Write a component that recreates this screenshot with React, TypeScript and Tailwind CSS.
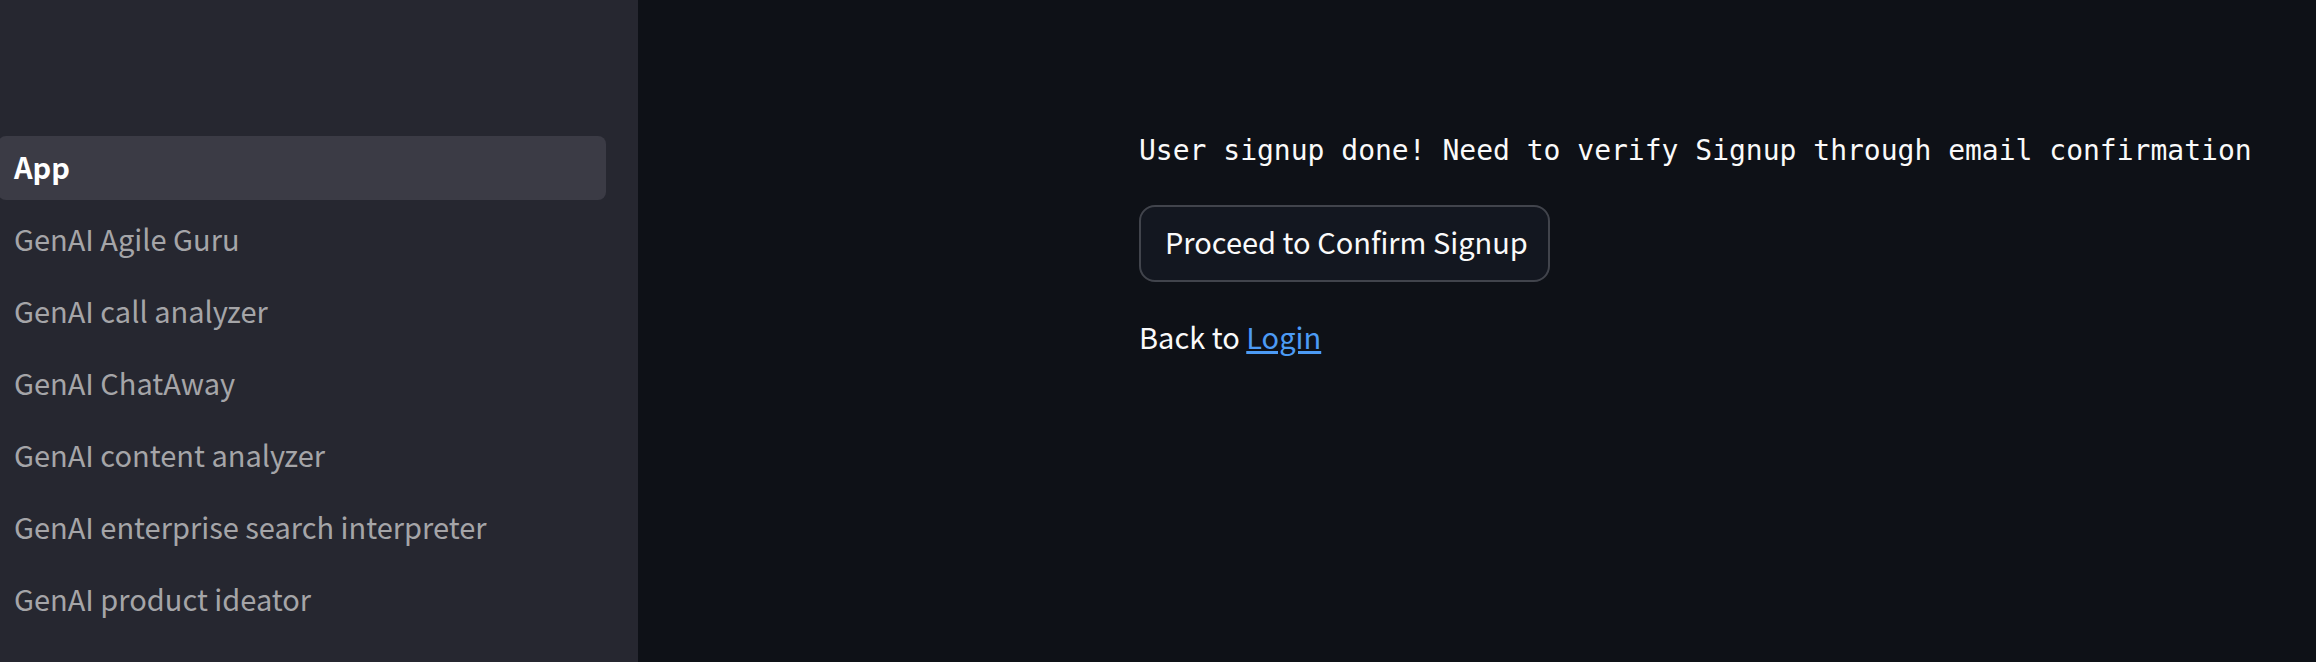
const pages = [
  "App",
  "GenAI Agile Guru",
  "GenAI call analyzer",
  "GenAI ChatAway",
  "GenAI content analyzer",
  "GenAI enterprise search interpreter",
  "GenAI product ideator",
];

export default function App() {
  return (
    <div className="flex min-h-screen overflow-x-hidden bg-[#0e1117] font-['Noto_Sans_CJK_SC',sans-serif] text-[29px] leading-[52px] text-[#fafafa]">
      <aside className="w-[638px] shrink-0 bg-[#262730] pt-[136px] pr-8">
        <nav aria-label="Pages">
          <ul className="-ml-0.5 flex flex-col gap-2">
            {pages.map((page, index) => (
              <li key={page}>
                <a
                  href="#"
                  aria-current={index === 0 ? "page" : undefined}
                  className={
                    index === 0
                      ? "flex h-16 items-center rounded-lg bg-[#3b3b45] px-4 pb-1 font-bold text-white"
                      : "flex h-16 items-center rounded-lg px-4 pb-1 text-[#a5a5a8]"
                  }
                >
                  {page}
                </a>
              </li>
            ))}
          </ul>
        </nav>
      </aside>
      <main className="flex min-w-0 flex-1 flex-col items-start pt-[129px] pl-[501px]">
        <p className="mb-8 font-['DejaVu_Sans_Mono',monospace] text-[28px] leading-[44px] whitespace-nowrap">
          User signup done! Need to verify Signup through email confirmation
        </p>
        <button
          type="button"
          className="mb-7 h-[77px] rounded-2xl border-2 border-[#41444c] bg-[#131720] pr-5 pb-1.5 pl-6 whitespace-nowrap"
        >
          Proceed to Confirm Signup
        </button>
        <p>
          Back to{" "}
          <a
            href="#"
            className="text-[#4c9bf5] underline decoration-3 underline-offset-2"
          >
            Login
          </a>
        </p>
      </main>
    </div>
  );
}
